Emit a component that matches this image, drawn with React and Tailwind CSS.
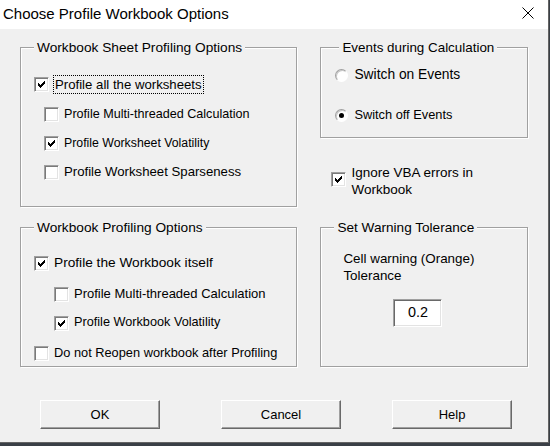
import React from "react";

function Check() {
  return (
    <svg width="7" height="7" viewBox="0 0 7 7" shapeRendering="crispEdges" className="block">
      <rect x="6" y="0" width="1" height="1" fill="#000" />
      <rect x="5" y="1" width="2" height="1" fill="#000" />
      <rect x="0" y="2" width="1" height="1" fill="#000" />
      <rect x="4" y="2" width="3" height="1" fill="#000" />
      <rect x="0" y="3" width="2" height="1" fill="#000" />
      <rect x="3" y="3" width="3" height="1" fill="#000" />
      <rect x="0" y="4" width="5" height="1" fill="#000" />
      <rect x="1" y="5" width="3" height="1" fill="#000" />
      <rect x="2" y="6" width="1" height="1" fill="#000" />
    </svg>
  );
}

function Box({ checked, className = "" }) {
  return (
    <span
      className={`flex items-center justify-center shrink-0 w-[15px] h-[15px] bg-white border border-t-[#a0a0a0] border-l-[#a0a0a0] border-r-white border-b-white shadow-[inset_1px_1px_0_#7a7a7a,inset_-1px_-1px_0_#e3e3e3] ${className}`}
    >
      {checked ? <Check /> : null}
    </span>
  );
}

function Radio({ checked }) {
  return (
    <span className="flex items-center justify-center shrink-0 w-[13px] h-[13px] rounded-full bg-white border border-t-[#a0a0a0] border-l-[#a0a0a0] border-r-white border-b-white shadow-[inset_1px_1px_0_#c8c8c8]">
      {checked ? <span className="block w-[5px] h-[5px] rounded-full bg-black" /> : null}
    </span>
  );
}

function Frame({ title, legendLeft, legendSize, className = "", children }) {
  return (
    <div
      className={`relative border border-[#a0a0a0] shadow-[inset_1px_1px_0_#fff,1px_1px_0_#fff] ${className}`}
    >
      <span
        className={`absolute top-[-9px] ${legendLeft} ${legendSize} bg-[#f0f0f0] px-[3px] leading-[18px] whitespace-nowrap text-black`}
      >
        {title}
      </span>
      {children}
    </div>
  );
}

function Button({ children, className = "" }) {
  return (
    <button
      className={`w-[120px] h-[29px] flex items-center justify-center bg-[#f0f0f0] border border-t-white border-l-white border-r-[#696969] border-b-[#696969] shadow-[inset_-1px_-1px_0_#a0a0a0] text-[13px] text-black ${className}`}
    >
      {children}
    </button>
  );
}

export default function App() {
  return (
    <div className="w-[550px] h-[446px] overflow-hidden bg-[#3a3f46] font-['Liberation_Sans',Arial,sans-serif] text-black">
      <div className="w-[549px] h-[443px] flex flex-col bg-[#f0f0f0] border-r border-b border-[#646464]">
        {/* Title bar */}
        <div className="h-[29px] bg-white flex items-start justify-between shrink-0">
          <span className="pl-[3px] mt-[5px] text-[15px] leading-[18px] whitespace-nowrap">
            Choose Profile Workbook Options
          </span>
          <svg width="12" height="12" viewBox="0 0 12 12" className="mt-[7px] mr-[14px]">
            <path d="M0.5 0.5 L11.5 11.5 M11.5 0.5 L0.5 11.5" stroke="#000" strokeWidth="1" fill="none" />
          </svg>
        </div>

        {/* Body */}
        <div className="flex gap-[23px] px-[20px] pt-[18px]">
          {/* Left column */}
          <div className="w-[278px] flex flex-col">
            <Frame
              title="Workbook Sheet Profiling Options"
              legendLeft="left-[13px]"
              legendSize="text-[13.7px]"
              className="h-[160px]"
            >
              <div className="flex flex-col pl-[13px] pt-[26px]">
                <div className="flex items-center h-[20px] gap-[4px]">
                  <Box checked />
                  <span className="border border-dotted border-black px-[1px] text-[13.2px] leading-[17px] whitespace-nowrap">
                    Profile all the worksheets
                  </span>
                </div>
                <div className="flex items-center h-[20px] gap-[5px] ml-[10px] mt-[10px]">
                  <Box />
                  <span className="text-[12.6px] whitespace-nowrap">Profile Multi-threaded Calculation</span>
                </div>
                <div className="flex items-center h-[20px] gap-[5px] ml-[10px] mt-[9px]">
                  <Box checked />
                  <span className="text-[12.3px] whitespace-nowrap">Profile Worksheet Volatility</span>
                </div>
                <div className="flex items-center h-[20px] gap-[5px] ml-[10px] mt-[9px]">
                  <Box />
                  <span className="text-[13.2px] whitespace-nowrap">Profile Worksheet Sparseness</span>
                </div>
              </div>
            </Frame>

            <Frame
              title="Workbook Profiling Options"
              legendLeft="left-[13px]"
              legendSize="text-[13.7px]"
              className="h-[140px] mt-[20px]"
            >
              <div className="flex flex-col pl-[13px] pt-[25px]">
                <div className="flex items-center h-[20px] gap-[5px]">
                  <Box checked />
                  <span className="text-[13.7px] whitespace-nowrap">Profile the Workbook itself</span>
                </div>
                <div className="flex items-center h-[20px] gap-[5px] ml-[20px] mt-[11px]">
                  <Box />
                  <span className="text-[13px] whitespace-nowrap">Profile Multi-threaded Calculation</span>
                </div>
                <div className="flex items-center h-[20px] gap-[5px] ml-[20px] mt-[9px]">
                  <Box checked />
                  <span className="text-[12.7px] whitespace-nowrap">Profile Workbook Volatility</span>
                </div>
                <div className="flex items-center h-[20px] gap-[5px] mt-[10px]">
                  <Box />
                  <span className="text-[12.8px] whitespace-nowrap">Do not Reopen workbook after Profiling</span>
                </div>
              </div>
            </Frame>
          </div>

          {/* Right column */}
          <div className="w-[208px] flex flex-col">
            <Frame
              title="Events during Calculation"
              legendLeft="left-[18px]"
              legendSize="text-[13.4px]"
              className="h-[91px] shrink-0"
            >
              <div className="flex flex-col pl-[14px] pt-[17px]">
                <div className="flex items-center h-[20px] gap-[6px]">
                  <Radio />
                  <span className="text-[13.8px] whitespace-nowrap">Switch on Events</span>
                </div>
                <div className="flex items-center h-[20px] gap-[6px] mt-[20px]">
                  <Radio checked />
                  <span className="text-[12.8px] whitespace-nowrap">Switch off Events</span>
                </div>
              </div>
            </Frame>

            <div className="flex items-start gap-[5px] pl-[11px] mt-[26px]">
              <Box checked className="mt-[8px]" />
              <span className="text-[13.5px] leading-[17px] whitespace-nowrap">
                Ignore VBA errors in
                <br />
                Workbook
              </span>
            </div>

            <Frame
              title="Set Warning Tolerance"
              legendLeft="left-[13px]"
              legendSize="text-[13.6px]"
              className="h-[140px] mt-auto"
            >
              <div className="flex flex-col pt-[22px]">
                <span className="pl-[22px] text-[13.4px] leading-[17px] whitespace-nowrap">
                  Cell warning (Orange)
                  <br />
                  Tolerance
                </span>
                <div className="ml-[72px] mt-[15px] w-[49px] h-[28px] flex items-center justify-center bg-white border border-t-[#a0a0a0] border-l-[#a0a0a0] border-r-white border-b-white shadow-[inset_1px_1px_0_#696969,inset_-1px_-1px_0_#e3e3e3] text-[14.4px]">
                  0.2
                </div>
              </div>
            </Frame>
          </div>
        </div>

        {/* Buttons */}
        <div className="flex pl-[40px] mt-[33px]">
          <Button>OK</Button>
          <Button className="ml-[61px]">Cancel</Button>
          <Button className="ml-[51px]">Help</Button>
        </div>
      </div>
    </div>
  );
}
